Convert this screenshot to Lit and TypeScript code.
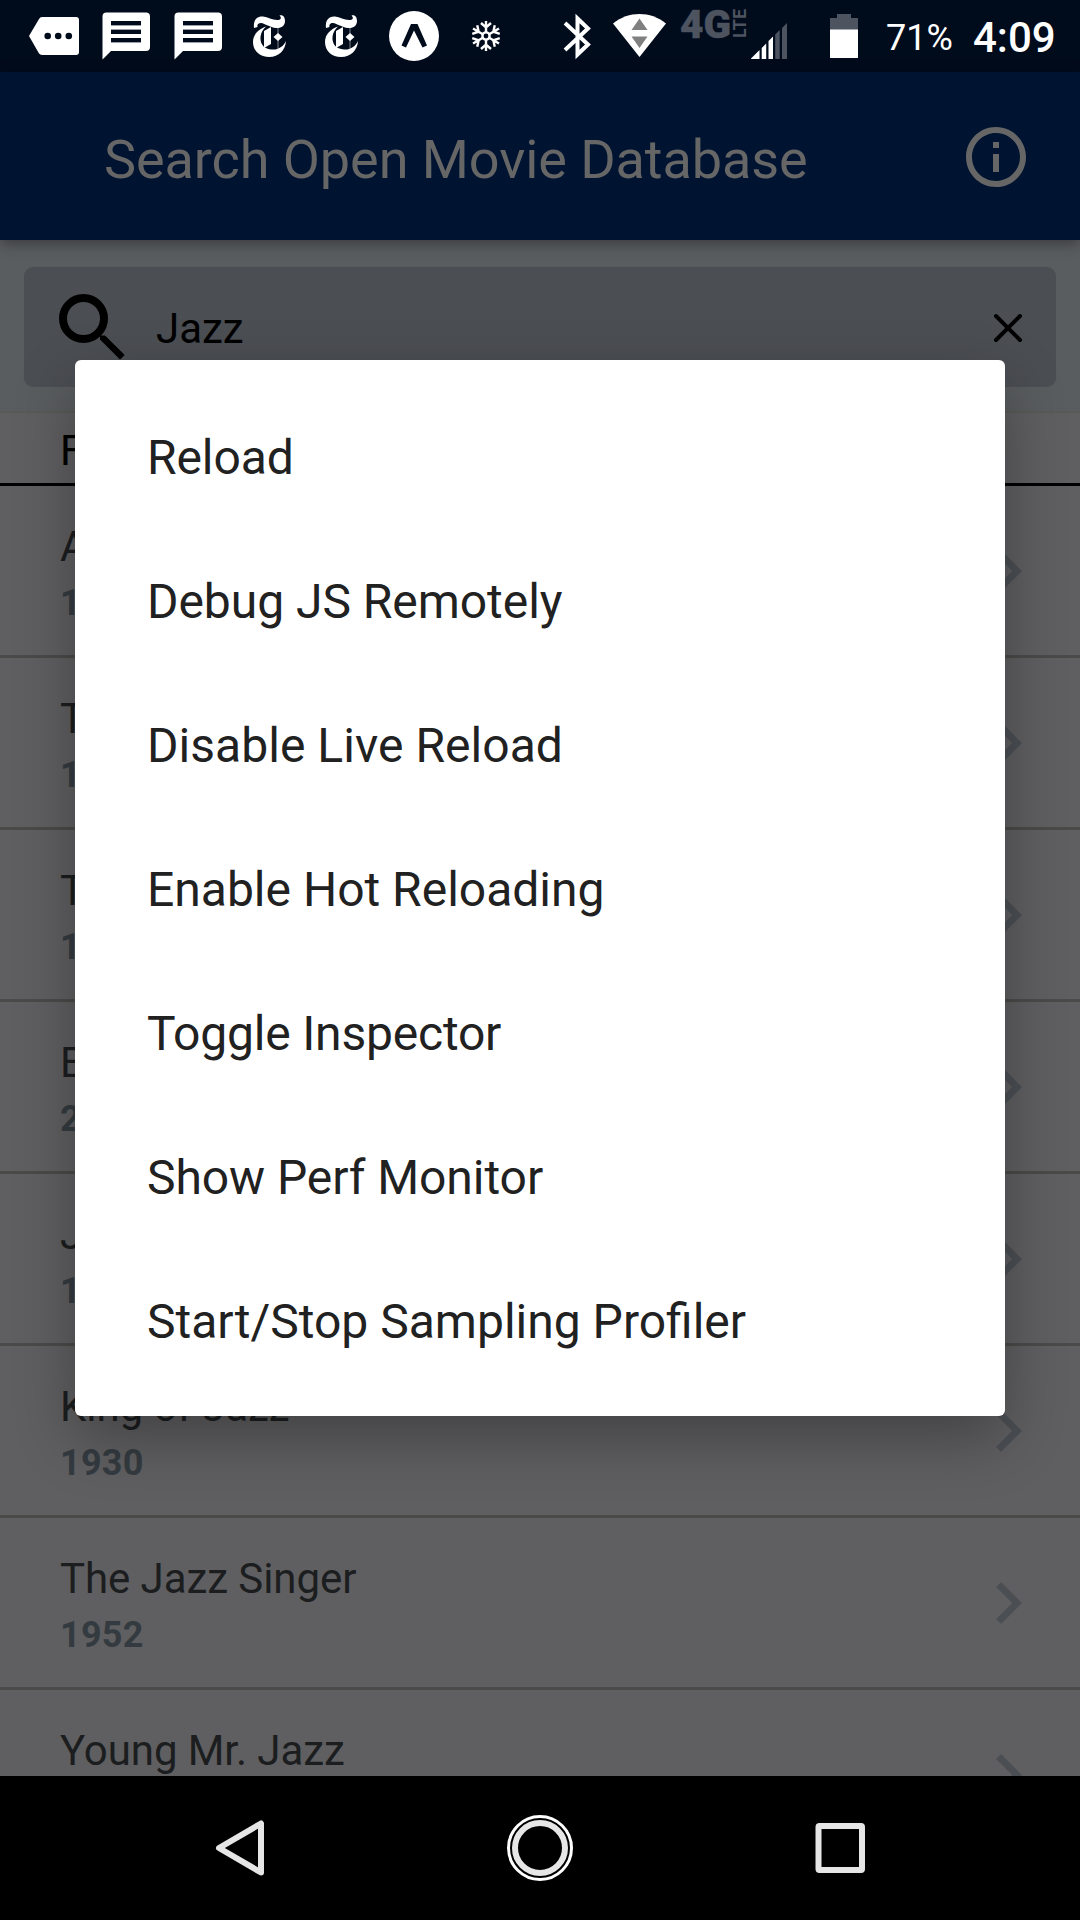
import { LitElement, html, css, svg } from "lit";
import { customElement, property } from "lit/decorators.js";
import { styleMap } from "lit/directives/style-map.js";

interface Movie {
  title: string;
  year: string;
}

interface MenuItem {
  label: string;
  tracking: number;
}

const MOVIES: Movie[] = [
  { title: "All That Jazz", year: "1979" },
  { title: "The Jazz Singer", year: "1927" },
  { title: "The Jazz Singer", year: "1980" },
  { title: "Ella", year: "2001" },
  { title: "Jazz on a Summer's Day", year: "1959" },
  { title: "King of Jazz", year: "1930" },
  { title: "The Jazz Singer", year: "1952" },
  { title: "Young Mr. Jazz", year: "1919" },
];

const MENU: MenuItem[] = [
  { label: "Reload", tracking: -0.1 },
  { label: "Debug JS Remotely", tracking: -0.04 },
  { label: "Disable Live Reload", tracking: 0.04 },
  { label: "Enable Hot Reloading", tracking: 0 },
  { label: "Toggle Inspector", tracking: -0.2 },
  { label: "Show Perf Monitor", tracking: -0.07 },
  { label: "Start/Stop Sampling Profiler", tracking: 0 },
];

const messageIcon = html`<svg class="cell" width="72" height="72" viewBox="0 0 72 72">
  <path fill="#fff" d="M18.500 12.500H46a4 4 0 0 1 4 4V47a4 4 0 0 1-4 4H11L2.500 59.500V16.500a4 4 0 0 1 4-4z"/>
  <path fill="#000b1c" d="M11 21h30v4H11zM11 30h30v4H11zM11 38h30v4H11z"/>
  <path fill="#9ba0a8" d="M11 25h30v1H11zM11 29h30v1H11zM11 42h30v1H11z"/>
</svg>`;

const gazetteIcon = html`<svg class="cell" width="72" height="72" viewBox="0 0 72 72">
  <g fill="#fff">
    <path d="M2 28C1 20 5 16 11 16.500C16 17 20 20 25 20C29 20 30 18 27.500 15.500C31 14.500 33 17 33 21C33 26 29 28.500 24 28C18 27.500 13 23.500 9 23C6 23 5 25 5.500 27z"/>
    <path d="M14 26.500C7 29 1 34 1 42C1 51 8 57 17 57C27 57 33.500 50 34 41C31 47 26 50 20 49.500C12 49 8 44 8.500 37C8.800 33 11 29 14 26.500z"/>
    <path d="M12 31l7-4v17l-7 4z"/>
    <path d="M26 33l4.500 4-4.500 4-4.500-4z"/>
    <path opacity=".5" d="M25.500 27h1v22h-1z"/>
  </g>
</svg>`;

@customElement("status-bar")
class StatusBar extends LitElement {
  static styles = css`
    :host {
      display: flex;
      height: 72px;
      background: #000b1c;
      color: #fff;
      font-family: Roboto, sans-serif;
      overflow: hidden;
    }
    .cell { display: block; flex: none; overflow: visible; }
    .left { display: flex; padding-left: 28px; flex: 1; }
    .right { display: flex; }
    .pct { width: 87px; font-size: 36px; line-height: 76px; white-space: nowrap; }
    .time { width: 107px; font-size: 42px; font-weight: 500; line-height: 75px; white-space: nowrap; }
  `;
  render() {
    return html`
      <div class="left">
        <svg class="cell" width="72" height="72" viewBox="0 0 72 72">
          <path fill="#fff" d="M14 17H48a3 3 0 0 1 3 3V52a3 3 0 0 1-3 3H14a4 4 0 0 1-3-1.500L1 36L11 19a4 4 0 0 1 3-2z"/>
          <g fill="#000b1c"><circle cx="19.700" cy="36" r="3.300"/><circle cx="30.200" cy="36" r="3.300"/><circle cx="40.800" cy="36" r="3.300"/></g>
        </svg>
        ${messageIcon}${messageIcon}
        <svg class="cell" width="8" height="72"></svg>
        ${gazetteIcon}${gazetteIcon}
        <svg class="cell" width="64" height="72" viewBox="0 0 64 72">
          <circle cx="18" cy="36" r="25" fill="#fff"/>
          <path fill="#000b1c" d="M15 24h6.500L31 45.500l-4.500 2L18 30.500l-8 17-4.500-2z"/>
        </svg>
        <svg class="cell" width="72" height="72" viewBox="0 0 72 72">
          <g transform="translate(26 36)" stroke="#fff" stroke-width="2.400" fill="none">
            <circle r="3.600"/>
            ${[0, 60, 120, 180, 240, 300].map(
              (a) => svg`<path transform="rotate(${a})" d="M0 -3.600V-15M-5 -13L0 -8.500L5 -13"/>`
            )}
          </g>
        </svg>
      </div>
      <div class="right">
        <svg class="cell" width="326" height="72" viewBox="560 0 326 72">
          <path fill="none" stroke="#fff" stroke-width="4" d="M565 23l23 21.500-10.500 10V18.500L588 28.500 565 50"/>
          <path fill="#fff" d="M613 23.500C621 17 630 14 639.500 14S658 17 666 23.500L639.500 57z"/>
          <path fill="#808080" d="M631.500 30h16L639.500 18.500zM631.500 36.500h16l-8 11.500z"/>
          <g fill="#4d5460" stroke="#4d5460" font-family="Roboto, sans-serif">
            <text x="680" y="37.500" font-size="38.500" font-weight="900" stroke-width="0.500" textLength="51" lengthAdjust="spacingAndGlyphs">4G</text>
            <text transform="translate(745.500 38) rotate(-90)" font-size="18.500" font-weight="700" stroke-width="0" textLength="29" lengthAdjust="spacingAndGlyphs">LTE</text>
          </g>
          <path fill="#fff" d="M751 59v-.500l8.500-8.500v9zM761.700 59V48l4.500-4.500V59zM768.500 59V41l4.500-4.500V59z"/>
          <path fill="#4d5460" d="M775.200 59V34.500l4.500-4.500V59zM782 59V28l5-5V59z"/>
          <path fill="#4d5460" d="M837 14h14v4h7v12h-28V18h7z"/>
          <path fill="#fff" d="M830 29.500h28V58h-28z"/>
        </svg>
        <div class="pct">71%</div>
        <div class="time">4:09</div>
      </div>
    `;
  }
}

@customElement("movie-row")
class MovieRow extends LitElement {
  @property() heading = "";
  @property() year = "";
  static styles = css`
    :host {
      display: flex;
      align-items: center;
      justify-content: space-between;
      box-sizing: border-box;
      height: 172px;
      flex: none;
      padding: 0 30px 0 60px;
      border-bottom: 3px solid #4a4a49;
      font-family: Roboto, sans-serif;
    }
    .text { padding-top: 8px; }
    .title { font-size: 42px; line-height: 56px; color: #1b1d1f; letter-spacing: -0.07px; white-space: nowrap; }
    .year { font-size: 36px; line-height: 56px; font-weight: 700; color: #343b40; letter-spacing: 0.25px; }
  `;
  render() {
    return html`
      <div class="text">
        <div class="title">${this.heading}</div>
        <div class="year">${this.year}</div>
      </div>
      <svg width="84" height="84" viewBox="0 0 24 24">
        <path fill="#4b4f54" d="M10 6L8.590 7.410 13.170 12l-4.580 4.590L10 18l6-6z"/>
      </svg>
    `;
  }
}

@customElement("app-root")
class AppRoot extends LitElement {
  static styles = css`
    :host {
      display: flex;
      flex-direction: column;
      position: relative;
      width: 1080px;
      height: 1920px;
      overflow: hidden;
      background: #5f5f61;
      font-family: Roboto, sans-serif;
    }
    status-bar, .bar, .search, .section, .nav { flex: none; }
    .bar {
      display: flex;
      align-items: center;
      justify-content: space-between;
      box-sizing: border-box;
      height: 168px;
      padding: 2px 48px 0 104px;
      background: #001431;
      color: #666;
      box-shadow: 0 3px 14px rgba(0, 0, 0, 0.4);
      z-index: 1;
    }
    .bar-title { font-size: 54px; line-height: 64px; padding-top: 5px; letter-spacing: -0.07px; white-space: nowrap; }
    .search {
      box-sizing: border-box;
      height: 173px;
      padding: 27px 24px 24px;
      background: #5a5d5f;
      border-bottom: 2px solid #595958;
    }
    .field {
      display: flex;
      align-items: center;
      box-sizing: border-box;
      height: 120px;
      padding: 0 33px 0 34px;
      border-radius: 9px;
      background: #4b4e53;
      font-size: 42px;
      color: #000;
    }
    .query { flex: 1; padding: 3px 0 0 30px; }
    .clear { padding-top: 2px; }
    .section {
      box-sizing: border-box;
      height: 73px;
      padding-left: 60px;
      border-bottom: 3px solid #000;
      font-size: 42px;
      line-height: 76px;
      color: #000;
    }
    .list { display: flex; flex-direction: column; flex: 1; min-height: 0; overflow: hidden; }
    .nav {
      display: flex;
      align-items: center;
      justify-content: center;
      height: 144px;
      background: #000;
      z-index: 3;
    }
    .dialog {
      position: absolute;
      left: 75px;
      top: 360px;
      width: 930px;
      height: 1056px;
      box-sizing: border-box;
      padding: 24px 0;
      border-radius: 6px;
      background: #fff;
      box-shadow: 0 22px 60px rgba(0, 0, 0, 0.3);
      z-index: 2;
    }
    .item {
      height: 144px;
      padding-left: 72px;
      font-size: 48px;
      line-height: 148px;
      color: #212121;
      white-space: nowrap;
    }
  `;
  render() {
    return html`
      <status-bar></status-bar>
      <div class="bar">
        <div class="bar-title">Search Open Movie Database</div>
        <svg width="72" height="72" viewBox="0 0 24 24">
          <path fill="#666" d="M11 17h2v-6h-2v6zm1-15C6.480 2 2 6.480 2 12s4.480 10 10 10 10-4.480 10-10S17.520 2 12 2zm0 18c-4.410 0-8-3.590-8-8s3.590-8 8-8 8 3.590 8 8-3.590 8-8 8zM11 9h2V7h-2v2z"/>
        </svg>
      </div>
      <div class="search">
        <div class="field">
          <svg width="68" height="68" viewBox="0 0 68 68">
            <circle cx="25.500" cy="25.500" r="20.500" fill="none" stroke="#000" stroke-width="8"/>
            <path d="M42 46.500V42.500h5L66.700 62 62 66.500z"/>
          </svg>
          <div class="query">Jazz</div>
          <svg class="clear" width="30" height="30" viewBox="0 0 30 30">
            <path d="M3 3L27 27M27 3L3 27" stroke="#000" stroke-width="4" stroke-linecap="round"/>
          </svg>
        </div>
      </div>
      <div class="section">Found</div>
      <div class="list">
        ${MOVIES.map((m) => html`<movie-row .heading=${m.title} .year=${m.year}></movie-row>`)}
      </div>
      <div class="nav">
        <svg width="720" height="144" viewBox="180 1776 720 144" fill="none" stroke="#e6e6e6" stroke-width="6" stroke-linejoin="round">
          <path d="M219 1848L261 1823.500V1872.500z"/>
          <circle cx="540" cy="1848" r="25"/>
          <circle cx="540" cy="1848" r="31.500" stroke="#fff" stroke-width="3"/>
          <rect x="818.500" y="1826" width="43.500" height="44" rx="1"/>
        </svg>
      </div>
      <div class="dialog">
        ${MENU.map(
          (m) => html`<div class="item" style=${styleMap({ letterSpacing: m.tracking ? `${m.tracking}px` : "normal" })}>${m.label}</div>`
        )}
      </div>
    `;
  }
}
